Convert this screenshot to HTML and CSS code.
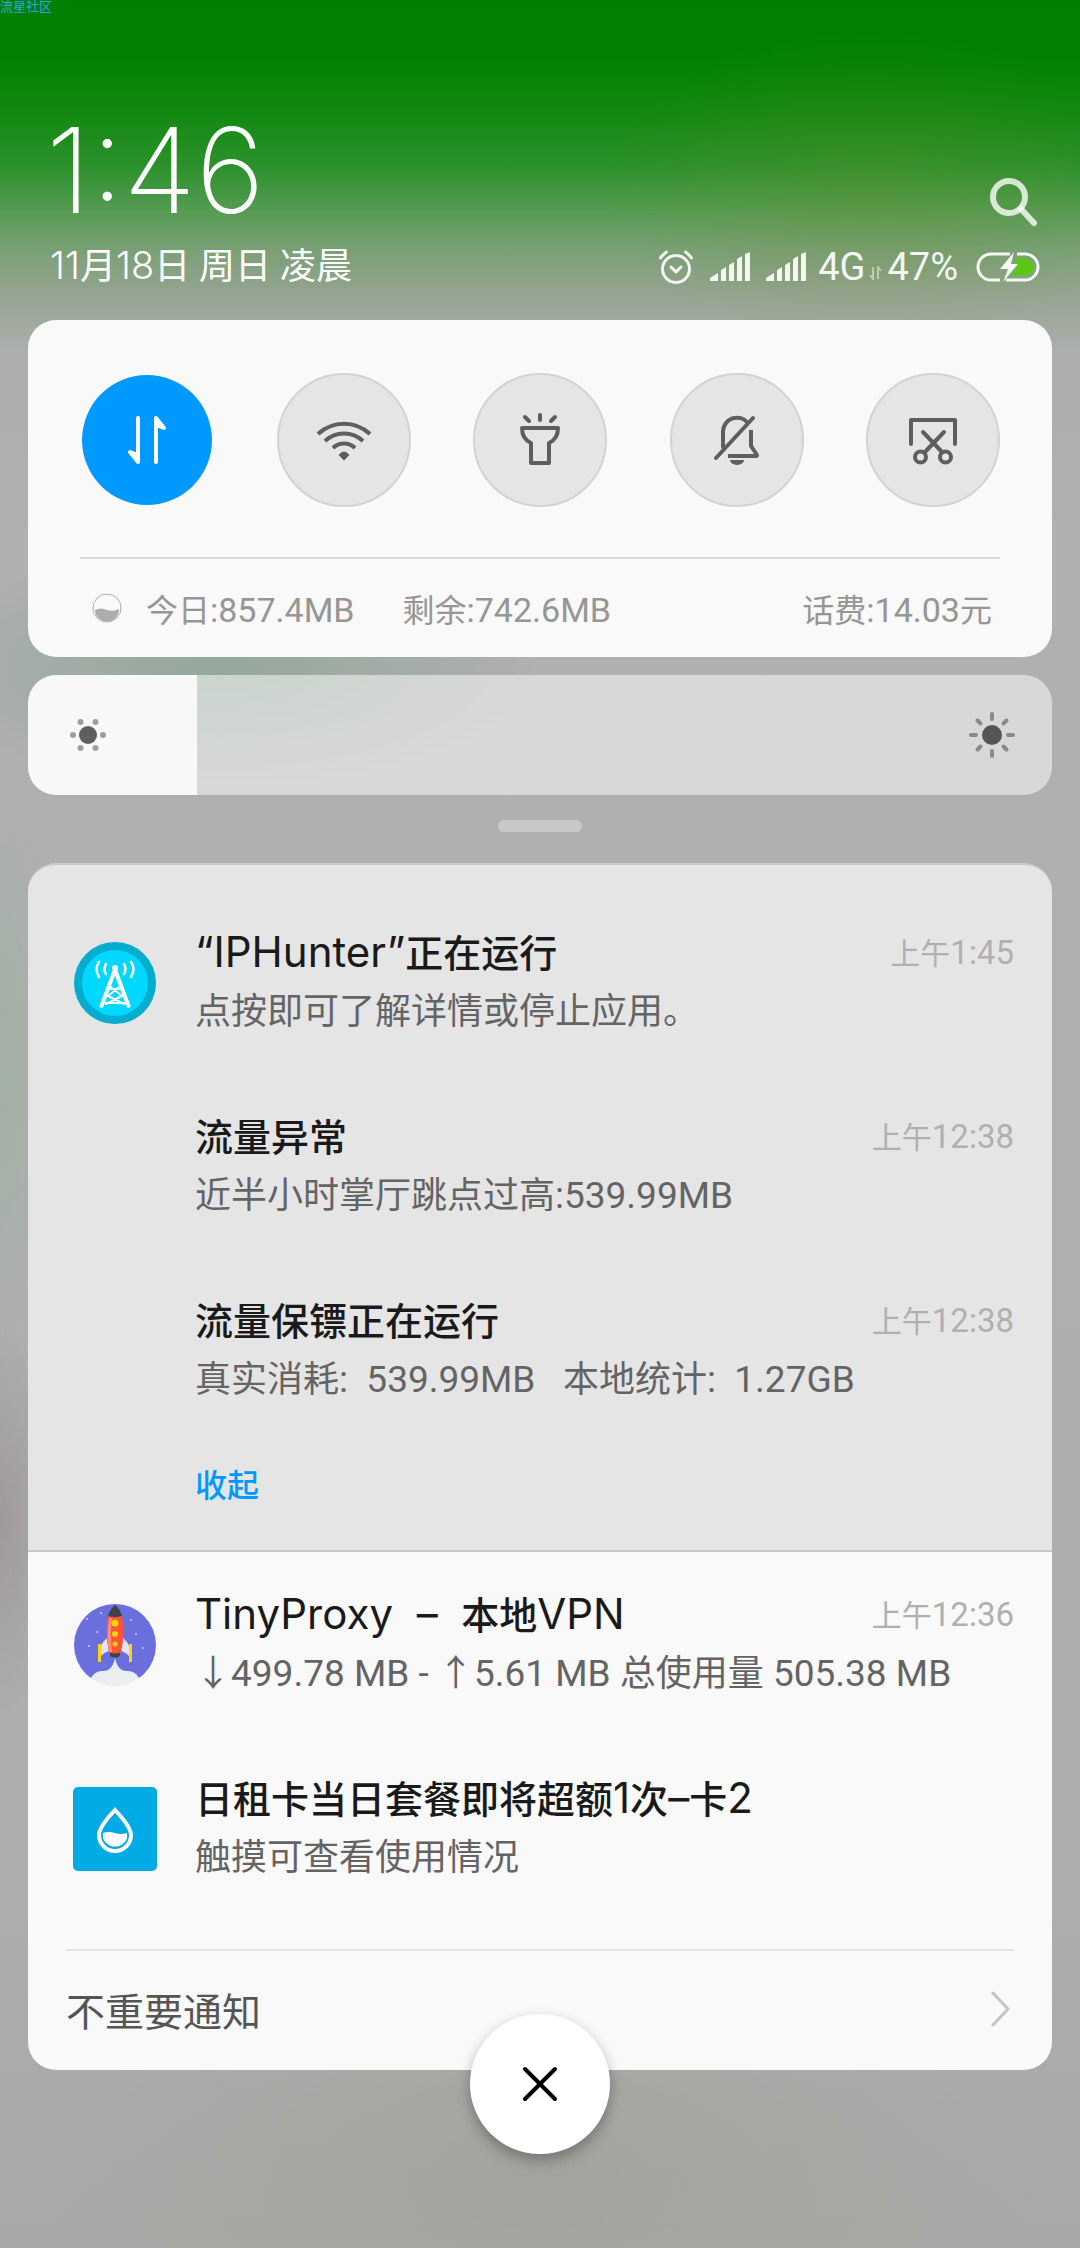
FILE: index.html
```
<!DOCTYPE html>
<html lang="zh-CN">
<head>
<meta charset="utf-8">
<meta name="viewport" content="width=device-width, initial-scale=1">
<title>通知栏</title>
<link rel="stylesheet" href="styles.css">
</head>
<body>
<div class="shade">
  <p class="watermark">流星社区</p>
  <header class="header">
    <div class="header-left">
      <time class="clock">1:46</time>
      <p class="date"><span class="latin">11</span>月<span class="latin">18</span>日 周日 凌晨</p>
    </div>
    <div class="header-right">
      <button class="search" type="button" aria-label="搜索">
        <svg width="48" height="50" viewBox="0 0 48 50" fill="none" stroke="currentColor" stroke-width="6" stroke-linecap="round"><circle cx="19" cy="19" r="16"/><path d="M31 31l13 14" stroke-width="6"/></svg>
      </button>
      <div class="status">
        <svg class="status-alarm" width="36" height="36" viewBox="0 0 36 36" fill="none" stroke="currentColor" stroke-width="3" stroke-linecap="round" stroke-linejoin="round"><circle cx="18" cy="20" r="13.5"/><path d="M13 18l5 5 5-5M2.500 9a22 22 0 0 1 6-6M33.500 9a22 22 0 0 0-6-6"/></svg>
        <svg class="status-signal" width="40" height="30" viewBox="0 0 40 30" fill="currentColor"><path d="M0 29v-3l8-5v8zM11 29V18l5-3v14zM19 29V13l5-3v19zM27 29V7l5-3v25zM35 29V2l5-2v29z"/></svg>
        <svg class="status-signal" width="40" height="30" viewBox="0 0 40 30" fill="currentColor"><path d="M0 29v-3l8-5v8zM11 29V18l5-3v14zM19 29V13l5-3v19zM27 29V7l5-3v25zM35 29V2l5-2v29z"/></svg>
        <span>4G</span>
        <svg class="status-traffic" width="14" height="14" viewBox="0 0 14 14" fill="none" stroke="currentColor" stroke-width="2"><path d="M4 1v12L1 9M9 13V1l3 4"/></svg>
        <span>47%</span>
        <svg class="status-battery" width="64" height="30" viewBox="0 0 64 30"><path d="M34 2H15a13 13 0 0 0 0 26h9M41 2h8a13 13 0 0 1 0 26H30" fill="none" stroke="#f4f6f4" stroke-width="3"/><path d="M40 6.500h9a8.500 8.500 0 0 1 0 17H35l8-11h-5z" fill="#58c815"/><path d="M38 0L24 17h8l-5 13 15-18h-7z" fill="#f4f6f4"/></svg>
      </div>
    </div>
  </header>

  <main class="panels">
    <section class="card controls">
      <div class="toggles">
        <button class="toggle toggle-on" type="button" aria-label="移动数据" aria-pressed="true">
          <svg width="56" height="56" viewBox="0 0 56 56" fill="none" stroke="currentColor" stroke-width="4" stroke-linecap="round" stroke-linejoin="round"><path d="M19 6v44M19 50l-8-10 8 3zM37 50V6M37 6l8 10-8-3z"/></svg>
        </button>
        <button class="toggle" type="button" aria-label="无线网络" aria-pressed="false">
          <svg width="56" height="56" viewBox="0 0 56 56" fill="none" stroke="currentColor" stroke-width="4"><path d="M2 22a38 38 0 0 1 52 0M9 29a28 28 0 0 1 38 0M17 36a16 16 0 0 1 22 0"/><path d="M28 48l-5-5q5-6 10 0z" fill="currentColor" stroke="currentColor" stroke-width="1"/></svg>
        </button>
        <button class="toggle" type="button" aria-label="手电筒" aria-pressed="false">
          <svg width="56" height="56" viewBox="0 0 56 56" fill="none" stroke="currentColor" stroke-width="4" stroke-linecap="round" stroke-linejoin="round"><path d="M10 16h36q0 11-9 15v20H19V31q-9-4-9-15zM28 3v5M13 5l4 4M43 5l-4 4"/></svg>
        </button>
        <button class="toggle" type="button" aria-label="静音" aria-pressed="false">
          <svg width="56" height="56" viewBox="0 0 56 56" fill="none" stroke="currentColor" stroke-width="4" stroke-linecap="round" stroke-linejoin="round"><path d="M14 35V20a14 14 0 0 1 25-9M7 46L44 6"/><path d="M42 18v16l6 9q0 1-1 1H19" stroke-linecap="butt"/><path d="M21 48h14a7 5 0 0 1-14 0z" fill="currentColor" stroke="none"/></svg>
        </button>
        <button class="toggle" type="button" aria-label="截屏" aria-pressed="false">
          <svg width="56" height="56" viewBox="0 0 56 56" fill="none" stroke="currentColor" stroke-width="4" stroke-linecap="round" stroke-linejoin="round"><path d="M6 32V8h44v24M18 20l19 20M39 20L20 40"/><circle cx="15.500" cy="45" r="5.500"/><circle cx="40.500" cy="45" r="5.500"/></svg>
        </button>
      </div>
      <div class="usage">
        <svg width="30" height="30" viewBox="0 0 30 30"><circle cx="15" cy="15" r="14" fill="none" stroke="#adadad"/><path d="M3 17q5-3 12 0 7 2 12-1a12 12 0 0 1-24 1z" fill="#adadad"/></svg>
        <span>今日<span class="latin">:857.4MB</span></span>
        <span class="usage-left">剩余<span class="latin">:742.6MB</span></span>
        <span class="usage-bill">话费<span class="latin">:14.03</span>元</span>
      </div>
    </section>

    <div class="brightness">
      <input class="brightness-range" type="range" min="0" max="1000" value="165" aria-label="亮度" style="--level: 16.5%">
      <svg class="brightness-low" width="36" height="36" viewBox="0 0 36 36" fill="#9e9e9e"><circle cx="18" cy="18" r="9" fill="#5f5f5f"/><circle cx="3" cy="18" r="3"/><circle cx="33" cy="18" r="3"/><circle cx="10.500" cy="5" r="3"/><circle cx="25.500" cy="5" r="3"/><circle cx="10.500" cy="31" r="3"/><circle cx="25.500" cy="31" r="3"/></svg>
      <svg class="brightness-high" width="46" height="46" viewBox="0 0 46 46" stroke="#8a8a8a" stroke-width="4" stroke-linecap="round"><circle cx="23" cy="23" r="10" fill="#555" stroke="none"/><path d="M23 2v5M23 39v5M2 23h5M39 23h5M8.500 8.500l3 3M34.500 34.500l3 3M8.500 37.500l3-3M34.500 11.500l3-3"/></svg>
    </div>

    <div class="handle"></div>

    <section class="notices">
      <div class="group group-open">
        <article class="notice">
          <svg class="notice-icon" width="82" height="82" viewBox="0 0 82 82" fill="none" stroke="#fff" stroke-linecap="round" stroke-linejoin="round"><circle cx="41" cy="41" r="41" fill="#00adce" stroke="none"/><circle cx="41" cy="41" r="33" fill="#00d8ff" stroke="none"/><circle cx="41" cy="26" r="3" fill="#fff" stroke="none"/><path d="M40.500 29L27.500 64M41.500 29l13 35" stroke-width="4"/><path d="M31 61h21M35 47h12M37 45l11 9-16 8M45 45l-11 9 16 8" stroke-width="2"/><path d="M32 22q-3 5 0 10M50 22q3 5 0 10M25 20q-5 7 0 15M57 20q5 7 0 15" stroke-width="2.500"/></svg>
          <h2 class="notice-title"><span class="latin">“IPHunter”</span>正在运行</h2>
          <time class="notice-time">上午<span class="latin">1:45</span></time>
          <p class="notice-body">点按即可了解详情或停止应用。</p>
        </article>
        <article class="notice">
          <h2 class="notice-title">流量异常</h2>
          <time class="notice-time">上午<span class="latin">12:38</span></time>
          <p class="notice-body">近半小时掌厅跳点过高<span class="latin">:539.99MB</span></p>
        </article>
        <article class="notice">
          <h2 class="notice-title">流量保镖正在运行</h2>
          <time class="notice-time">上午<span class="latin">12:38</span></time>
          <p class="notice-body">真实消耗<span class="latin">:&nbsp; 539.99MB&nbsp;&nbsp; </span>本地统计<span class="latin">:&nbsp; 1.27GB</span></p>
        </article>
        <button class="collapse" type="button">收起</button>
      </div>
      <div class="group">
        <article class="notice">
          <svg class="notice-icon" width="82" height="82" viewBox="0 0 82 82"><circle cx="41" cy="41" r="41" fill="#6b6fdd"/><path d="M0 82V68l17 6h48l17-6v14z" fill="#f9f9f9"/><path d="M17 74q4-7 11-7 10 1 13-13 3 14 13 13 7 0 11 7-11 8-24 8t-24-8z" fill="#e9eff0"/><g fill="#c9cbf5"><circle cx="27" cy="9" r="1"/><circle cx="13" cy="15" r="1"/><circle cx="57" cy="16" r="1"/><circle cx="23" cy="28" r="1"/><circle cx="62" cy="30" r="1"/><circle cx="15" cy="42" r="1"/><circle cx="69" cy="44" r="1"/></g><path d="M33 34q-9 7-9 22 4-7 11-9zM49 34q9 7 9 22-4-7-11-9z" fill="#e3e4f5"/><path d="M24 40h3v18h-3zM55 40h3v18h-3z" fill="#ffd400"/><path d="M36 47h10v5q-5 3-10 0z" fill="#3e4347"/><path d="M34 12h14q3 19-1 36-6 3-12 0-4-17-1-36z" fill="#ff5436"/><path d="M35 14h3q-2 17 0 34h-3q-3-17 0-34z" fill="#ff8a75"/><path d="M41 1q-5 4-7 11 7 2 14 0-2-7-7-11z" fill="#3e4347"/><g fill="#ffd400"><circle cx="41" cy="19" r="3.500"/><circle cx="41" cy="30" r="3"/><circle cx="41" cy="40" r="2.500"/></g></svg>
          <h2 class="notice-title"><span class="latin">TinyProxy&nbsp; –&nbsp; </span>本地<span class="latin">VPN</span></h2>
          <time class="notice-time">上午<span class="latin">12:36</span></time>
          <p class="notice-body">↓<span class="latin">499.78 MB - </span>↑<span class="latin">5.61 MB </span>总使用量<span class="latin"> 505.38 MB</span></p>
        </article>
        <article class="notice">
          <svg class="notice-icon" width="84" height="84" viewBox="0 0 84 84"><rect width="84" height="84" rx="5" fill="#00aae5"/><path d="M42 23q16 17 16 25a16 16 0 0 1-32 0q0-8 16-25z" fill="none" stroke="#fff" stroke-width="4"/><path d="M30 46q6-2 12 0 6 2 12 0 1 6-3 10a13 13 0 0 1-18 0q-4-4-3-10z" fill="#fff"/></svg>
          <h2 class="notice-title">日租卡当日套餐即将超额<span class="latin">1</span>次<span class="latin">–</span>卡<span class="latin">2</span></h2>
          <p class="notice-body">触摸可查看使用情况</p>
        </article>
        <a class="minor" href="#minor">不重要通知
          <svg width="20" height="38" viewBox="0 0 20 38" fill="none" stroke="#c4c4c4" stroke-width="3" stroke-linecap="round" stroke-linejoin="round"><path d="M2 3l15 16L2 35"/></svg>
        </a>
      </div>
      <button class="clear" type="button" aria-label="清除全部通知">
        <svg width="36" height="36" viewBox="0 0 36 36" stroke="#000" stroke-width="4" stroke-linecap="round"><path d="M3 3l30 30M33 3L3 33"/></svg>
      </button>
    </section>
  </main>
</div>
</body>
</html>
```
FILE: styles.css
```
* {
  box-sizing: border-box;
}

body,
p,
h2 {
  margin: 0;
}

body {
  font-family: "Roboto", "Noto Sans CJK SC", sans-serif;
  font-weight: 400;
}

button {
  padding: 0;
  border: 0;
  background: none;
  color: inherit;
  font: inherit;
  cursor: pointer;
}

svg {
  display: block;
  flex: none;
}

.latin {
  font-weight: 400;
  line-height: 1;
}

.shade {
  min-height: 100vh;
  background:
    radial-gradient(260px 160px at 870px 190px, rgba(110, 140, 40, 0.25), transparent),
    radial-gradient(320px 120px at 220px 665px, rgba(136, 164, 146, 0.7), transparent),
    radial-gradient(60px 300px at 0 1060px, rgba(160, 176, 164, 0.9), transparent),
    radial-gradient(60px 200px at 0 1520px, rgba(156, 150, 154, 0.9), transparent),
    radial-gradient(500px 240px at 540px 2180px, rgba(162, 162, 156, 0.8), transparent),
    linear-gradient(#008000 0, #028202 60px, #12880f 110px, #2b912b 165px, #559b52 210px, #7aa076 250px, #98a594 300px, #acaeac 350px, #b0b0b0 600px, #adadad 1900px, #a8a8a6 2248px);
}

.watermark {
  font-size: 13px;
  line-height: 13px;
  color: #2fa4e6;
}

.header {
  display: flex;
  justify-content: space-between;
  align-items: flex-end;
  height: 307px;
  padding: 0 40px 24px 50px;
  color: #fff;
}

.clock {
  display: block;
  margin: 0 0 8px -4px;
  font-family: "Inter", sans-serif;
  font-size: 118px;
  font-weight: 200;
  line-height: 120px;
}

.date {
  font-size: 36px;
  line-height: 58px;
}

.date .latin {
  font-family: "Inter", sans-serif;
  font-size: 38px;
  font-weight: 300;
}

.header-right {
  display: flex;
  flex-direction: column;
  align-items: flex-end;
  gap: 10px;
}

.search {
  margin-right: 2px;
  color: rgba(255, 255, 255, 0.78);
}

.status {
  display: flex;
  align-items: center;
  height: 58px;
  font-size: 38px;
  color: #f4f6f4;
}

.status-alarm,
.status-signal {
  margin-right: 16px;
}

.status-signal + span {
  margin-left: -4px;
}

.status-traffic {
  align-self: flex-end;
  margin: 0 4px 16px;
  opacity: 0.5;
}

.status-battery {
  margin-left: 18px;
}

.panels {
  display: flex;
  flex-direction: column;
  padding: 0 28px 94px;
}

.card {
  border-radius: 28px;
  background: #f8f9f8;
}

.controls {
  padding: 53px 52px 0;
}

.toggles {
  display: flex;
  justify-content: space-between;
  padding-bottom: 50px;
  border-bottom: 2px solid #d9d9d9;
}

.toggle {
  display: grid;
  place-items: center;
  width: 134px;
  height: 134px;
  border: 2px solid #d3d3d3;
  border-radius: 50%;
  background: #e5e5e5;
  color: #5c5e5f;
}

.toggle-on {
  border-color: transparent;
  background: #0099ff padding-box;
  color: #fff;
}

.usage {
  display: flex;
  align-items: center;
  height: 98px;
  padding: 0 8px 0 12px;
  font-size: 32px;
  color: #969696;
}

.usage svg {
  margin-right: 24px;
}

.usage .latin {
  font-size: 34px;
}

.usage-left {
  margin-left: 48px;
}

.usage-bill {
  margin-left: auto;
}

.brightness {
  position: relative;
  margin-top: 18px;
}

.brightness-range {
  display: block;
  width: 100%;
  height: 120px;
  margin: 0;
  border-radius: 28px;
  appearance: none;
  background: linear-gradient(to right, #f8f8f8 var(--level), rgba(255, 255, 255, 0.5) var(--level));
}

.brightness-range::-webkit-slider-thumb {
  appearance: none;
  width: 2px;
  height: 120px;
}

.brightness-low,
.brightness-high {
  position: absolute;
  top: 50%;
  transform: translateY(-50%);
  pointer-events: none;
}

.brightness-low {
  left: 42px;
}

.brightness-high {
  right: 37px;
}

.handle {
  align-self: center;
  width: 84px;
  height: 12px;
  margin: 25px 0 31px;
  border-radius: 6px;
  background: #c9c8c9;
}

.notices {
  position: relative;
}

.group {
  display: flex;
  flex-direction: column;
  gap: 68px;
  padding: 35px 38px 0;
  border-radius: 0 0 28px 28px;
  background: #f9f9f9;
}

.group-open {
  padding: 60px 38px 35px;
  border-top: 2px solid #c9c9c9;
  border-bottom: 2px solid #c9c9c9;
  border-radius: 28px 28px 0 0;
  background: #e5e5e5;
}

.notice {
  display: grid;
  grid-template-columns: 129px 1fr auto;
  grid-template-rows: 58px 58px;
}

.notice-icon {
  grid-area: 1 / 1 / 3 / 2;
  align-self: center;
  justify-self: center;
  margin-right: 32px;
}

.notice-title {
  grid-area: 1 / 2;
  font-size: 38px;
  font-weight: 500;
  line-height: 58px;
  color: #1a1a1a;
}

.notice-title .latin {
  font-family: "Inter", sans-serif;
  font-size: 42px;
}

.notice-body {
  grid-area: 2 / 2 / 3 / 4;
  font-size: 36px;
  line-height: 58px;
  color: #646464;
}

.notice-body .latin {
  font-size: 37px;
}

.notice-time {
  grid-area: 1 / 3;
  font-size: 30px;
  line-height: 58px;
  color: #b0b0b0;
}

.notice-time .latin {
  font-size: 33px;
}

.collapse {
  align-self: flex-start;
  margin: -20px 0 0 129px;
  font-size: 32px;
  font-weight: 500;
  line-height: 58px;
  color: #0099ff;
}

.minor {
  display: flex;
  align-items: center;
  justify-content: space-between;
  height: 121px;
  margin-top: -6px;
  padding: 0 3px 4px 0;
  border-top: 2px solid #e4e4e4;
  font-size: 39px;
  color: #555;
  text-decoration: none;
}

.clear {
  position: absolute;
  bottom: -84px;
  left: 50%;
  display: grid;
  place-items: center;
  width: 140px;
  height: 140px;
  border-radius: 50%;
  background: #fff;
  box-shadow: 0 6px 14px rgba(0, 0, 0, 0.3);
  transform: translateX(-50%);
}
```
